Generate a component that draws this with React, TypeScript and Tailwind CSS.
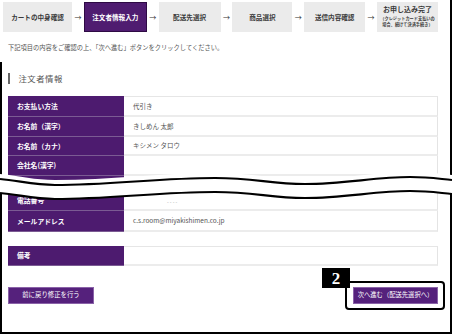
import React from "react";

const JP = { fontFamily: '"Noto Sans CJK JP", "Noto Sans", sans-serif' };
const SERIF = { fontFamily: '"Liberation Serif", "Noto Sans CJK JP", serif' };

function Step({ w, active, children }: { w: string; active?: boolean; children: React.ReactNode }) {
  return (
    <div
      className={`${w} h-[30px] shrink-0 flex items-center justify-center text-[6.6px] font-semibold leading-none ${
        active ? "bg-[#4f1c70] border border-[#2e0a44] text-white" : "bg-[#ebebeb] text-[#3a3a3a]"
      }`}
    >
      {children}
    </div>
  );
}

function Arrow() {
  return <div className="flex-1 flex items-center justify-center text-[7px] text-[#333] leading-none">→</div>;
}

function Row({
  label,
  value,
  h = "h-[20px]",
  first,
  children,
}: {
  label: string;
  value?: string;
  h?: string;
  first?: boolean;
  children?: React.ReactNode;
}) {
  return (
    <div className={`flex ${h}`}>
      <div className="w-[116px] shrink-0 bg-[#4d1b6f] border-b border-[#7b5b93] flex items-center pl-[9px] text-white text-[6.8px] font-bold leading-none">
        {label}
      </div>
      <div
        className={`flex-1 border-r border-[#e4e4e4] border-b-2 border-b-[#ececec] ${
          first ? "border-t border-t-[#e6e6e6]" : ""
        } flex items-center pl-[9px] text-[6.5px] text-[#555] leading-none`}
      >
        {value}
        {children}
      </div>
    </div>
  );
}

export default function App() {
  return (
    <div className="relative w-[452px] h-[334px] bg-white border-r-2 border-b-2 border-black" style={JP}>
      {/* partial left frame line */}
      <div className="absolute left-0 top-[62px] bottom-[-2px] w-[2px] bg-black" />

      <div className="pl-[8px] pr-[12px] pt-[2px]">
        {/* steps */}
        <div className="flex -ml-[5px]">
          <Step w="w-[69px]">カートの中身確認</Step>
          <Arrow />
          <Step w="w-[63px]" active>
            注文者情報入力
          </Step>
          <Arrow />
          <Step w="w-[62px]">配送先選択</Step>
          <Arrow />
          <Step w="w-[60px]">商品選択</Step>
          <Arrow />
          <Step w="w-[61px]">送信内容確認</Step>
          <Arrow />
          <div className="w-[61px] h-[30px] shrink-0 bg-[#ebebeb] text-[#3a3a3a] flex flex-col items-center pt-[3px]">
            <div className="text-[7px] font-semibold leading-[9px]">お申し込み完了</div>
            <div className="text-[4.2px] font-semibold leading-[6px] mt-[1px]">（クレジットカード支払いの</div>
            <div className="text-[4.2px] font-semibold leading-[6px]">場合、続けて決済手続き）</div>
          </div>
        </div>

        {/* instruction */}
        <div className="mt-[11px] h-[9px] text-[6.25px] leading-[9px] text-[#555] whitespace-nowrap">
          下記項目の内容をご確認の上、「次へ進む」ボタンをクリックしてください。
        </div>

        {/* heading */}
        <div className="mt-[21px] h-[11px] flex items-center">
          <div className="w-[1.5px] h-[11px] bg-[#666]" />
          <div className="ml-[9px] text-[8.4px] text-[#555] leading-none tracking-[0.5px]">注文者情報</div>
        </div>

        {/* table */}
        <div className="mt-[12px]">
          <Row label="お支払い方法" value="代引き" h="h-[21px]" first />
          <Row label="お名前（漢字）" value="きしめん 太郎" />
          <Row label="お名前（カナ）" value="キシメン タロウ" h="h-[19px]" />
          <Row label="会社名(漢字)" />
          <Row label="" h="h-[15px]" />
          <Row label="電話番号" h="h-[20px]">
            <span className="pl-[34px] text-[5px] text-[#999] pt-[2px]">- - - -</span>
          </Row>
          <Row label="メールアドレス" value="c.s.room@miyakishimen.co.jp" h="h-[21px]" />
          <div className="h-[14px]" />
          <Row label="備考" first />
        </div>

        {/* buttons */}
        <div className="mt-[21px] flex justify-between items-start">
          <div
            className="w-[86px] h-[17px] bg-[#55217c] border border-[#8a62a8] flex items-center justify-center text-white text-[6.4px] leading-none"
            style={SERIF}
          >
            前に戻り修正を行う
          </div>
          <div className="relative">
            <div className="absolute left-[-8px] right-[-7px] top-[-6px] bottom-[-6px] border-2 border-black rounded-[4px]" />
            <div
              className="absolute left-[-31px] top-[-19px] w-[28px] h-[20px] bg-black flex items-center justify-center text-white text-[17px] font-bold leading-none"
              style={SERIF}
            >
              2
            </div>
            <div
              className="relative w-[85px] h-[17px] bg-[#55217c] border border-[#8a62a8] flex items-center justify-center text-white text-[6.3px] leading-none"
              style={SERIF}
            >
              次へ進む（配送先選択へ）
            </div>
          </div>
        </div>
      </div>

      {/* wave break */}
      <svg className="absolute left-0 top-[170px]" width="452" height="32" viewBox="0 0 452 32">
        <path
          d="M0,4 C20,6 35,10 55,10 C110,10 160,3 215,3 C255,3 270,9 305,9 C345,9 375,2 410,2 C430,2 440,4 452,5 L452,24 C440,23 430,21 410,21 C375,21 345,28 305,28 C270,28 255,22 215,22 C160,22 110,29 55,29 C35,29 20,25 0,23 Z"
          fill="#ffffff"
        />
        <path
          d="M0,9 C20,11 35,15 55,15 C110,15 160,8 215,8 C255,8 270,14 305,14 C345,14 375,7 410,7 C430,7 440,9 452,10"
          fill="none"
          stroke="#000"
          strokeWidth="2.2"
        />
        <path
          d="M0,23 C20,25 35,29 55,29 C110,29 160,22 215,22 C255,22 270,28 305,28 C345,28 375,21 410,21 C430,21 440,23 452,24"
          fill="none"
          stroke="#000"
          strokeWidth="2.2"
        />
      </svg>
    </div>
  );
}
